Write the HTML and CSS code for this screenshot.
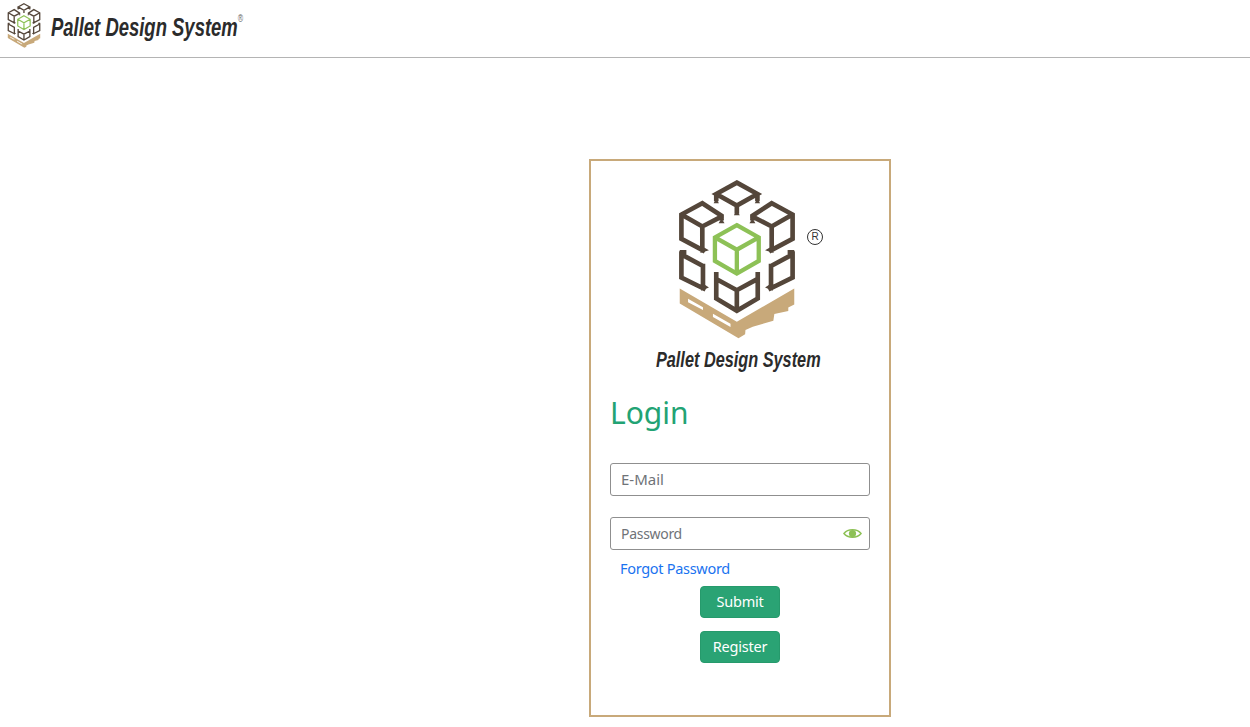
FILE: index.html
```html
<!DOCTYPE html>
<html lang="en">
<head>
<meta charset="utf-8">
<title>Pallet Design System - Login</title>
<link rel="stylesheet" href="styles.css">
</head>
<body>
<svg class="defs" width="0" height="0" aria-hidden="true">
  <symbol id="pallet-logo" viewBox="118 28 349 479">
    <path class="pallet" d="M120 355 L292 455 L465 355 V403 L447 412 V423 L405 432 L402 452 L340 470 L318 480 L317 493 L297 505 L120 400 Z"/>
    <path class="slot" d="M145 386 L190 411 V420 L145 396 Z M220 431 L273 461 V471 L220 441 Z"/>
    <g class="box">
      <path d="M292 36 L354 70 L292 105 L230 70 Z M230 68 V92 M354 68 V92 M292 105 V130"/>
      <path d="M246 150 V136 L188 98 L125 132 V205 L196 243 M125 132 L188 168 L250 136 M188 168 V240"/>
      <path d="M339 150 V136 L397 98 L460 132 V205 L389 243 M460 132 L397 168 L335 136 M397 168 V240"/>
      <path d="M125 243 V322 L198 358 M125 252 L190 287 M190 280 V350 M120 246 H140"/>
      <path d="M460 243 V322 L387 358 M460 252 L395 287 M395 280 V350 M465 246 H445"/>
      <path d="M230 305 V385 L292 422 L355 385 V305 M230 326 L292 360 L355 326 M292 360 V422"/>
    </g>
    <path class="head" d="M222 98 H238 L230 84 Z M346 98 H362 L354 84 Z M283 134 H301 L292 120 Z M237 158 H255 L246 144 Z M348 158 H330 L339 144 Z M182 248 L208 240 L188 228 Z M403 248 L377 240 L397 228 Z M184 362 L208 352 L190 340 Z M401 362 L377 352 L395 340 Z"/>
    <path class="cube" d="M292 164 L358 201 V272 L292 310 L226 272 V201 Z M226 201 L292 238 L358 201 M292 238 V310"/>
  </symbol>
</svg>

<header class="topbar">
  <svg class="logo-small" aria-hidden="true"><use href="#pallet-logo"/></svg>
  <span class="brand-small">Pallet Design System<sup class="reg-small">®</sup></span>
</header>

<main class="page">
  <section class="card">
    <div class="logo-wrap">
      <svg class="logo-large" aria-hidden="true"><use href="#pallet-logo"/></svg>
      <span class="reg-mark">R</span>
    </div>
    <div class="brand-row"><span class="brand-large">Pallet Design System</span></div>
    <h1 class="title">Login</h1>
    <form class="form">
      <input class="field" type="text" placeholder="E-Mail">
      <div class="password">
        <input class="field field-password" type="password" placeholder="Password">
        <svg class="eye" viewBox="0 0 20 12" aria-hidden="true">
          <path class="eye-outline" d="M1 6 C5 0.8 15 0.8 19 6 C15 11.2 5 11.2 1 6 Z"/>
          <circle class="eye-ball" cx="10" cy="6" r="3.8"/>
        </svg>
      </div>
      <a class="forgot" href="#">Forgot Password</a>
      <button class="btn btn-submit" type="button">Submit</button>
      <button class="btn btn-register" type="button">Register</button>
    </form>
  </section>
</main>
</body>
</html>
```
FILE: styles.css
```css
* { box-sizing: border-box; }
html, body { margin: 0; height: 100%; }
body {
  background: #fff;
  font-family: "Noto Sans", "Open Sans", sans-serif;
  overflow: hidden;
}
.defs { position: absolute; }
.pallet { fill: #c8a97a; }
.slot { fill: #fff; }
.box { fill: none; stroke: #54463a; stroke-width: 14; }
.head { fill: #54463a; }
.cube { fill: none; stroke: #8dc156; stroke-width: 13; }

.topbar {
  height: 58px;
  border-bottom: 1px solid #b4b4b4;
  display: flex;
  align-items: flex-start;
  padding: 3px 0 0 7px;
}
.logo-small { width: 34px; height: 45px; }
.brand-small {
  display: inline-block;
  margin: 7px 0 0 10px;
  font: italic 700 26px/34px "Liberation Sans", sans-serif;
  color: #2b2b2b;
  white-space: nowrap;
  transform: scaleX(0.71);
  transform-origin: left center;
}
.reg-small {
  font-size: 10px;
  font-weight: 400;
  line-height: 0;
  vertical-align: 14px;
  color: #666;
}

.page {
  display: flex;
  justify-content: flex-start;
  padding: 101px 0 0 589px;
}
.card {
  width: 302px;
  height: 558px;
  border: 2px solid #c8a97a;
  padding: 19px 19px 0;
}
.logo-wrap {
  position: relative;
  display: flex;
  justify-content: center;
  margin-right: 7px;
}
.logo-large { width: 116px; height: 159px; }
.reg-mark {
  position: absolute;
  left: 197px;
  top: 49px;
  width: 16px;
  height: 16px;
  border: 1.5px solid #333;
  border-radius: 50%;
  font: 10px/13px "Liberation Sans", sans-serif;
  text-align: center;
  color: #333;
}
.brand-row {
  margin: 8px 3px 0 0;
  text-align: center;
  height: 26px;
}
.brand-large {
  display: inline-block;
  font: italic 700 22px/26px "Liberation Sans", sans-serif;
  color: #2b2b2b;
  white-space: nowrap;
  transform: scaleX(0.74);
}
.title {
  margin: 19px 0 0;
  font-size: 30px;
  font-weight: 400;
  line-height: 42px;
  color: #22a374;
}
.form {
  display: flex;
  flex-direction: column;
  margin-top: 29px;
}
.field {
  display: block;
  width: 260px;
  height: 33px;
  padding: 0 10px 2px;
  border: 1px solid #8f8f8f;
  border-radius: 3px;
  font: 15px "Noto Sans", sans-serif;
  color: #333;
  outline: none;
}
.field::placeholder { color: #6f7378; opacity: 1; }
.field-password::placeholder { font-size: 14px; letter-spacing: -0.3px; }
.password { position: relative; margin-top: 21px; }
.eye {
  position: absolute;
  right: 8px;
  top: 10px;
  width: 19px;
  height: 13px;
}
.eye-outline { fill: none; stroke: #8dc156; stroke-width: 1.5; }
.eye-ball { fill: #8dc156; }
.forgot {
  margin: 8px 0 0 10px;
  font-size: 14.5px;
  letter-spacing: -0.3px;
  line-height: 20px;
  color: #1a73f0;
  text-decoration: none;
}
.btn {
  align-self: flex-start;
  width: 80px;
  height: 32px;
  margin-left: 90px;
  background: #2aa374;
  border: 1px solid #269a6c;
  border-radius: 4px;
  color: #fff;
  font: 14.5px "Noto Sans", sans-serif;
  letter-spacing: -0.2px;
  padding: 0 0 2px;
}
.btn-submit { margin-top: 8px; }
.btn-register { margin-top: 13px; }
```
